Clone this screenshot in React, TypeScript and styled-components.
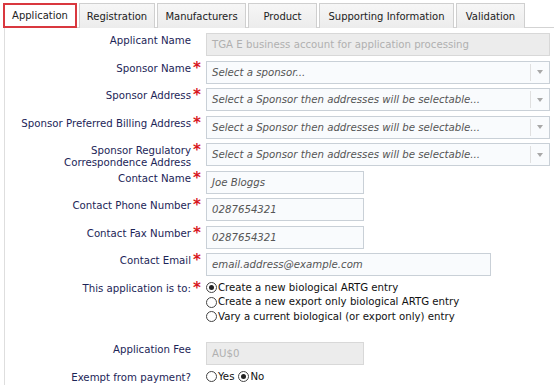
import React from "react";
import styled, { createGlobalStyle } from "styled-components";

const GlobalStyle = createGlobalStyle`
    body {
        margin: 0;
        background: #fff;
        font-family: "DejaVu Sans", Verdana, sans-serif;
        font-size: 10.2px;
    }
`;

const Page = styled.div`
    width: 554px;
    height: 385px;
    padding: 3px 0 0 3px;
    box-sizing: border-box;
    overflow: hidden;
`;

const TabBar = styled.div`
    display: flex;
    gap: 2px;
    height: 24px;
    border-bottom: 1px solid #d3d3d3;
`;

const Tab = styled.div<{ $active?: boolean; $w: number }>`
    display: flex;
    align-items: center;
    justify-content: center;
    box-sizing: border-box;
    width: ${(p) => p.$w}px;
    height: 25px;
    font-size: 10px;
    white-space: nowrap;
    color: #222;
    background: ${(p) => (p.$active ? "#fff" : "linear-gradient(#f6f6f6, #ececec)")};
    border: ${(p) => (p.$active ? "2px solid #d9383f" : "1px solid #cfcfcf")};
    border-bottom: ${(p) => (p.$active ? "2px solid #d9383f" : "none")};
    position: relative;
    z-index: ${(p) => (p.$active ? 1 : 0)};
`;

const Panel = styled.div`
    border-left: 1px solid #dedede;
    margin-left: 1px;
    padding-top: 5px;
`;

const Form = styled.div`
    display: grid;
    grid-template-columns: 186px 15px 1fr;
    row-gap: 4.5px;
`;

const Label = styled.div`
    box-sizing: border-box;
    height: 23px;
    text-align: right;
    color: #1c2557;
    line-height: 12px;
    padding-top: 2px;
    white-space: nowrap;
`;

const Star = styled.div`
    color: #d8161e;
    font-size: 15px;
    line-height: 13px;
    padding-top: 1px;
    padding-left: 2px;
    font-weight: bold;
`;

const Field = styled.div<{ $w?: number }>`
    box-sizing: border-box;
    height: 23px;
    width: ${(p) => (p.$w ? `${p.$w}px` : "344px")};
    display: flex;
    align-items: center;
    padding-left: 5px;
    border: 1px solid #c9d0d7;
    background: #f9fbfd;
    color: #555;
    font-style: italic;
    white-space: nowrap;
`;

const Disabled = styled(Field)`
    background: #ececec;
    border-color: #d8d8d8;
    color: #b0b0b0;
    font-style: normal;
`;

const Select = styled(Field)`
    padding-right: 0;
    justify-content: space-between;
`;

const Arrow = styled.div`
    width: 18px;
    height: 17px;
    border-left: 1px solid #e0e0e0;
    display: flex;
    align-items: center;
    justify-content: center;

    &::after {
        content: "";
        border-left: 3px solid transparent;
        border-right: 3px solid transparent;
        border-top: 4px solid #a8a8a8;
    }
`;

const Options = styled.div`
    display: flex;
    flex-direction: column;
    color: #111;
    line-height: 14.5px;
`;

const Inline = styled.div`
    display: flex;
    gap: 4px;
    color: #111;
`;

const Option = styled.label`
    display: flex;
    align-items: center;
    height: 14.5px;
`;

const Radio = styled.span<{ $on?: boolean }>`
    box-sizing: border-box;
    width: 11px;
    height: 11px;
    border-radius: 50%;
    border: 1px solid #444;
    background: #fff;
    margin-right: 1px;
    display: flex;
    align-items: center;
    justify-content: center;

    &::after {
        content: "";
        width: 5px;
        height: 5px;
        border-radius: 50%;
        background: ${(p) => (p.$on ? "#222" : "transparent")};
    }
`;

const Spacer = styled.div`
    grid-column: 1 / -1;
    height: 9px;
`;

const tabs = [
    { name: "Application", w: 74 },
    { name: "Registration", w: 76 },
    { name: "Manufacturers", w: 89 },
    { name: "Product", w: 69 },
    { name: "Supporting Information", w: 135 },
    { name: "Validation", w: 69 },
];

const addr = "Select a Sponsor then addresses will be selectable...";

const App: React.FC = () => {
    return (
        <>
            <GlobalStyle />
            <Page>
                <TabBar>
                    {tabs.map((t, i) => (
                        <Tab key={t.name} $active={i === 0} $w={t.w}>
                            {t.name}
                        </Tab>
                    ))}
                </TabBar>
                <Panel>
                    <Form>
                        <Label>Applicant Name</Label>
                        <div />
                        <Disabled>TGA E business account for application processing</Disabled>

                        <Label>Sponsor Name</Label>
                        <Star>*</Star>
                        <Select>
                            Select a sponsor...
                            <Arrow />
                        </Select>

                        <Label>Sponsor Address</Label>
                        <Star>*</Star>
                        <Select>
                            {addr}
                            <Arrow />
                        </Select>

                        <Label>Sponsor Preferred Billing Address</Label>
                        <Star>*</Star>
                        <Select>
                            {addr}
                            <Arrow />
                        </Select>

                        <Label>
                            Sponsor Regulatory
                            <br />
                            Correspondence Address
                        </Label>
                        <Star>*</Star>
                        <Select>
                            {addr}
                            <Arrow />
                        </Select>

                        <Label>Contact Name</Label>
                        <Star>*</Star>
                        <Field $w={158}>Joe Bloggs</Field>

                        <Label>Contact Phone Number</Label>
                        <Star>*</Star>
                        <Field $w={158}>0287654321</Field>

                        <Label>Contact Fax Number</Label>
                        <Star>*</Star>
                        <Field $w={158}>0287654321</Field>

                        <Label>Contact Email</Label>
                        <Star>*</Star>
                        <Field $w={285}>email.address@example.com</Field>

                        <Label>This application is to:</Label>
                        <Star>*</Star>
                        <Options>
                            <Option>
                                <Radio $on />
                                Create a new biological ARTG entry
                            </Option>
                            <Option>
                                <Radio />
                                Create a new export only biological ARTG entry
                            </Option>
                            <Option>
                                <Radio />
                                Vary a current biological (or export only) entry
                            </Option>
                        </Options>

                        <Spacer />

                        <Label>Application Fee</Label>
                        <div />
                        <Disabled $w={158}>AU$0</Disabled>

                        <Label>Exempt from payment?</Label>
                        <div />
                        <Inline>
                            <Option>
                                <Radio />
                                Yes
                            </Option>
                            <Option>
                                <Radio $on />
                                No
                            </Option>
                        </Inline>
                    </Form>
                </Panel>
            </Page>
        </>
    );
};

export default App;
